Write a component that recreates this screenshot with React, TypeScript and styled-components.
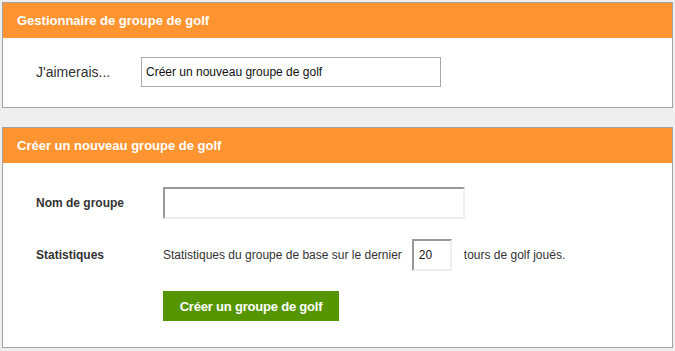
import React from "react";
import styled, { createGlobalStyle } from "styled-components";

const Global = createGlobalStyle`
  html, body { margin: 0; padding: 0; }
  body {
    background: #efefef;
    font-family: "Liberation Sans", Arial, sans-serif;
    color: #333;
  }
`;

const Page = styled.div`
  display: flex;
  flex-direction: column;
  gap: 19px;
  padding: 2px 0 0 2px;
  width: 671px;
`;

const Panel = styled.section`
  border: 1px solid #a3a3a3;
  background: #fff;
`;

const Header = styled.h2`
  margin: 0;
  height: 35px;
  display: flex;
  align-items: center;
  padding-left: 14px;
  background: #ff9431;
  color: #fff;
  font-size: 13px;
  font-weight: bold;
`;

const ChooserBody = styled.div`
  height: 69px;
  display: flex;
  align-items: center;
  padding: 0 0 1px 33px;
  box-sizing: border-box;
`;

const ChooserLabel = styled.span`
  width: 105px;
  font-size: 14px;
  color: #333;
`;

const Select = styled.div`
  box-sizing: border-box;
  width: 300px;
  height: 30px;
  border: 1px solid #a9a9a9;
  display: flex;
  align-items: center;
  padding-left: 4px;
  font-size: 12px;
  color: #111;
`;

const FormBody = styled.div`
  display: grid;
  grid-template-columns: 127px 1fr;
  row-gap: 20px;
  align-items: center;
  padding: 24px 0 26px 33px;
`;

const Label = styled.label`
  font-size: 12px;
  font-weight: bold;
  color: #333;
`;

const TextInput = styled.input<{ $w: number; $h: number }>`
  box-sizing: border-box;
  width: ${(p) => p.$w}px;
  height: ${(p) => p.$h}px;
  border-style: solid;
  border-width: 2px;
  border-color: #999 #eee #eee #999;
  padding: 0 0 0 5px;
  margin: 0;
  font-family: "Liberation Sans", Arial, sans-serif;
  font-size: 12px;
  color: #111;
  outline: none;
`;

const StatsLine = styled.div`
  display: flex;
  align-items: center;
  gap: 10px;
  font-size: 12px;
  color: #333;

  & > input {
    margin-right: 2px;
  }
`;

const Button = styled.button`
  grid-column: 2;
  justify-self: start;
  width: 176px;
  height: 30px;
  border: none;
  background: #559600;
  color: #fff;
  font-family: "Liberation Sans", Arial, sans-serif;
  font-size: 13px;
  font-weight: bold;
  letter-spacing: -0.2px;
  cursor: pointer;
`;

export default function App() {
  return (
    <>
      <Global />
      <Page>
        <Panel>
          <Header>Gestionnaire de groupe de golf</Header>
          <ChooserBody>
            <ChooserLabel>J'aimerais...</ChooserLabel>
            <Select>Créer un nouveau groupe de golf</Select>
          </ChooserBody>
        </Panel>
        <Panel>
          <Header>Créer un nouveau groupe de golf</Header>
          <FormBody>
            <Label>Nom de groupe</Label>
            <TextInput $w={302} $h={32} />
            <Label>Statistiques</Label>
            <StatsLine>
              <span>Statistiques du groupe de base sur le dernier</span>
              <TextInput $w={40} $h={32} defaultValue="20" />
              <span>tours de golf joués.</span>
            </StatsLine>
            <Button>Créer un groupe de golf</Button>
          </FormBody>
        </Panel>
      </Page>
    </>
  );
}
